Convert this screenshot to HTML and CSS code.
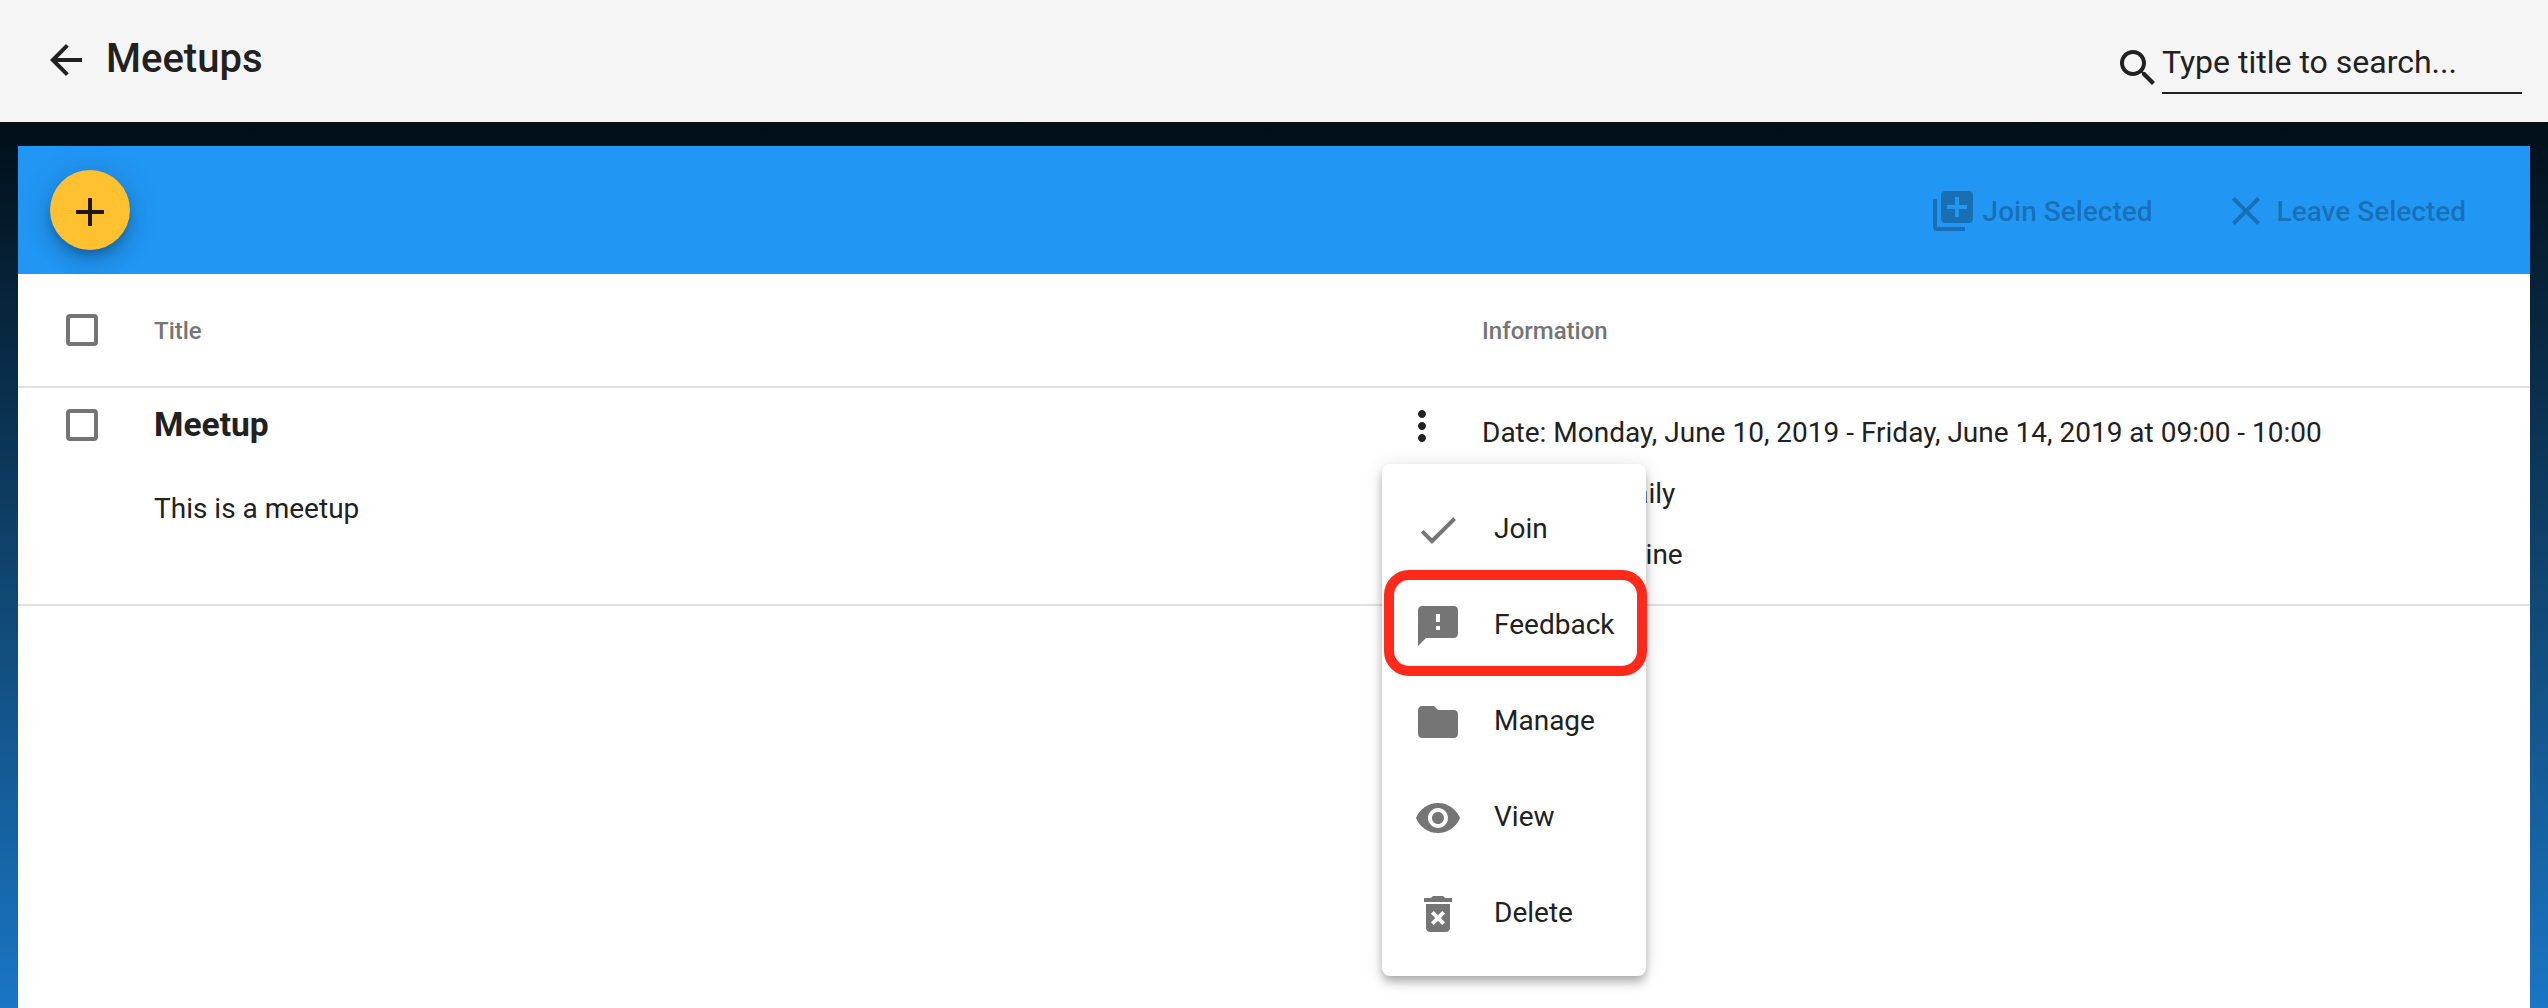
FILE: index.html
```html
<!DOCTYPE html>
<html lang="en">
<head>
<meta charset="utf-8">
<title>Meetups</title>
<link rel="stylesheet" href="styles.css">
</head>
<body>
<header class="topbar">
  <svg class="icon" viewBox="0 0 24 24"><path d="M20 11H7.83l5.59-5.59L12 4l-8 8 8 8 1.41-1.41L7.83 13H20v-2z"/></svg>
  <h1 class="page-title">Meetups</h1>
  <div class="search">
    <svg class="icon" viewBox="0 0 24 24"><path d="M15.5 14h-.79l-.28-.27C15.41 12.59 16 11.11 16 9.5 16 5.91 13.09 3 9.5 3S3 5.91 3 9.5 5.91 16 9.5 16c1.61 0 3.09-.59 4.23-1.57l.27.28v.79l5 4.99L20.49 19l-4.99-5zm-6 0C7.01 14 5 11.99 5 9.5S7.01 5 9.5 5 14 7.01 14 9.5 11.99 14 9.5 14z"/></svg>
    <div class="search-field">Type title to search...</div>
  </div>
</header>
<main class="content">
  <div class="toolbar">
    <div class="fab"><svg class="icon" viewBox="0 0 24 24"><path d="M19 13h-6v6h-2v-6H5v-2h6V5h2v6h6v2z"/></svg></div>
    <div class="action join">
      <svg class="icon" viewBox="0 0 24 24"><path d="M4 6H2v14c0 1.1.9 2 2 2h14v-2H4V6zm16-4H8c-1.1 0-2 .9-2 2v12c0 1.1.9 2 2 2h12c1.1 0 2-.9 2-2V4c0-1.1-.9-2-2-2zm-1 9h-4v4h-2v-4H9V9h4V5h2v4h4v2z"/></svg>
      <span>Join Selected</span>
    </div>
    <div class="action leave">
      <svg class="icon" viewBox="0 0 24 24"><path d="M19 6.41L17.59 5 12 10.59 6.41 5 5 6.41 10.59 12 5 17.59 6.41 19 12 13.41 17.59 19 19 17.59 13.41 12z"/></svg>
      <span>Leave Selected</span>
    </div>
  </div>
  <div class="row head">
    <div class="check"></div>
    <div class="label">Title</div>
    <div></div>
    <div class="label">Information</div>
  </div>
  <div class="row item">
    <div class="check"></div>
    <div>
      <h2 class="meetup-title">Meetup</h2>
      <p class="meetup-text">This is a meetup</p>
    </div>
    <div class="more">
      <svg class="icon" viewBox="0 0 24 24"><path d="M12 8c1.1 0 2-.9 2-2s-.9-2-2-2-2 .9-2 2 .9 2 2 2zm0 2c-1.1 0-2 .9-2 2s.9 2 2 2 2-.9 2-2-.9-2-2-2zm0 6c-1.1 0-2 .9-2 2s.9 2 2 2 2-.9 2-2-.9-2-2-2z"/></svg>
      <div class="menu">
        <div class="menu-item"><svg class="icon" viewBox="0 0 24 24"><path d="M9 16.17L4.83 12l-1.42 1.41L9 19 21 7l-1.41-1.41z"/></svg>Join</div>
        <div class="menu-item highlighted"><svg class="icon" viewBox="0 0 24 24"><path d="M20 2H4c-1.1 0-1.99.9-1.99 2L2 22l4-4h14c1.1 0 2-.9 2-2V4c0-1.1-.9-2-2-2zm-7 12h-2v-2h2v2zm0-4h-2V6h2v4z"/></svg>Feedback</div>
        <div class="menu-item"><svg class="icon" viewBox="0 0 24 24"><path d="M10 4H4c-1.1 0-1.99.9-1.99 2L2 18c0 1.1.9 2 2 2h16c1.1 0 2-.9 2-2V8c0-1.1-.9-2-2-2h-8l-2-2z"/></svg>Manage</div>
        <div class="menu-item"><svg class="icon" viewBox="0 0 24 24"><path d="M12 4.5C7 4.5 2.73 7.61 1 12c1.73 4.39 6 7.5 11 7.5s9.27-3.11 11-7.5c-1.73-4.39-6-7.5-11-7.5zM12 17c-2.76 0-5-2.24-5-5s2.24-5 5-5 5 2.24 5 5-2.24 5-5 5zm0-8c-1.66 0-3 1.34-3 3s1.34 3 3 3 3-1.34 3-3-1.34-3-3-3z"/></svg>View</div>
        <div class="menu-item"><svg class="icon" viewBox="0 0 24 24"><path d="M6 19c0 1.1.9 2 2 2h8c1.1 0 2-.9 2-2V7H6v12zm2.46-7.12l1.41-1.41L12 12.59l2.12-2.12 1.41 1.41L13.41 14l2.12 2.12-1.41 1.41L12 15.41l-2.12 2.12-1.41-1.41L10.59 14l-2.13-2.12zM15.5 4l-1-1h-5l-1 1H5v2h14V4z"/></svg>Delete</div>
      </div>
    </div>
    <div class="info">
      <div>Date: Monday, June 10, 2019 - Friday, June 14, 2019 at 09:00 - 10:00</div>
      <div>Recurring: Daily</div>
      <div>Location: Online</div>
    </div>
  </div>
</main>
</body>
</html>
```
FILE: styles.css
```css
* { box-sizing: border-box; }
body {
  margin: 0;
  height: 1008px;
  overflow: hidden;
  display: flex;
  flex-direction: column;
  font-family: Roboto, "Liberation Sans", sans-serif;
  font-size: 28px;
  color: #212121;
  background: linear-gradient(#000c14 100px, #114a78 620px, #1976c4 1008px);
}
h1, h2, p { margin: 0; }
.icon { width: 48px; height: 48px; flex: none; fill: currentColor; display: block; }
.topbar {
  height: 122px;
  flex: none;
  padding: 0 26px 0 42px;
  display: flex;
  align-items: center;
  background: #f5f5f5;
}
.topbar > .icon { margin-bottom: 2px; }
.page-title {
  margin-left: 16px;
  padding-bottom: 4px;
  font-size: 40px;
  font-weight: 500;
  line-height: 48px;
}
.search { margin-left: auto; display: flex; align-items: flex-start; padding-top: 10px; }
.search .icon { margin-top: 5px; }
.search-field {
  width: 360px;
  height: 55px;
  font-size: 32px;
  line-height: 46px;
  border-bottom: 2px solid #212121;
}
.content { flex: 1; margin: 24px 18px 0; background: #fff; }
.toolbar {
  height: 128px;
  padding: 0 64px 0 32px;
  display: flex;
  align-items: center;
  background: #2196f3;
}
.fab {
  width: 80px;
  height: 80px;
  padding: 18px 16px 14px;
  border-radius: 50%;
  background: #ffc12f;
  color: rgba(0, 0, 0, .87);
  box-shadow: 0 6px 10px -2px rgba(0, 0, 0, .2), 0 12px 20px rgba(0, 0, 0, .14), 0 2px 36px rgba(0, 0, 0, .12);
}
.action { display: flex; align-items: center; font-weight: 500; color: rgba(0, 0, 0, .26); padding-top: 2px; }
.join { margin-left: auto; gap: 6px; }
.leave { margin-left: 69px; gap: 7px; }
.row {
  display: grid;
  grid-template-columns: 88px 1244px 84px 1fr;
  padding-left: 48px;
  border-bottom: 2px solid #e0e0e0;
}
.head { height: 114px; align-items: center; font-size: 24px; font-weight: 500; color: #757575; }
.label { padding-top: 2px; }
.item { height: 218px; }
.check { width: 32px; height: 32px; border: 4px solid #757575; border-radius: 4px; }
.item .check { margin-top: 21px; }
.meetup-title { margin-top: 17px; font-size: 33.6px; line-height: 40px; font-weight: 700; }
.meetup-text { margin-top: 48px; line-height: 32px; }
.more { position: relative; padding-top: 14px; }
.info { padding-top: 14px; line-height: 61px; }
.menu {
  position: absolute;
  left: -16px;
  top: 76px;
  width: 264px;
  padding: 16px 0;
  border-radius: 8px;
  background: #fff;
  box-shadow: 0 4px 8px -2px rgba(0, 0, 0, .2), 0 8px 10px rgba(0, 0, 0, .14), 0 2px 20px rgba(0, 0, 0, .12);
}
.menu-item { position: relative; height: 96px; padding-left: 32px; display: flex; align-items: center; gap: 32px; }
.menu-item .icon { color: #757575; margin-top: 4px; }
.highlighted::after {
  content: "";
  position: absolute;
  inset: -6px -1px -4px 2px;
  border: 10px solid #ff2a1c;
  border-radius: 25px;
}
```
